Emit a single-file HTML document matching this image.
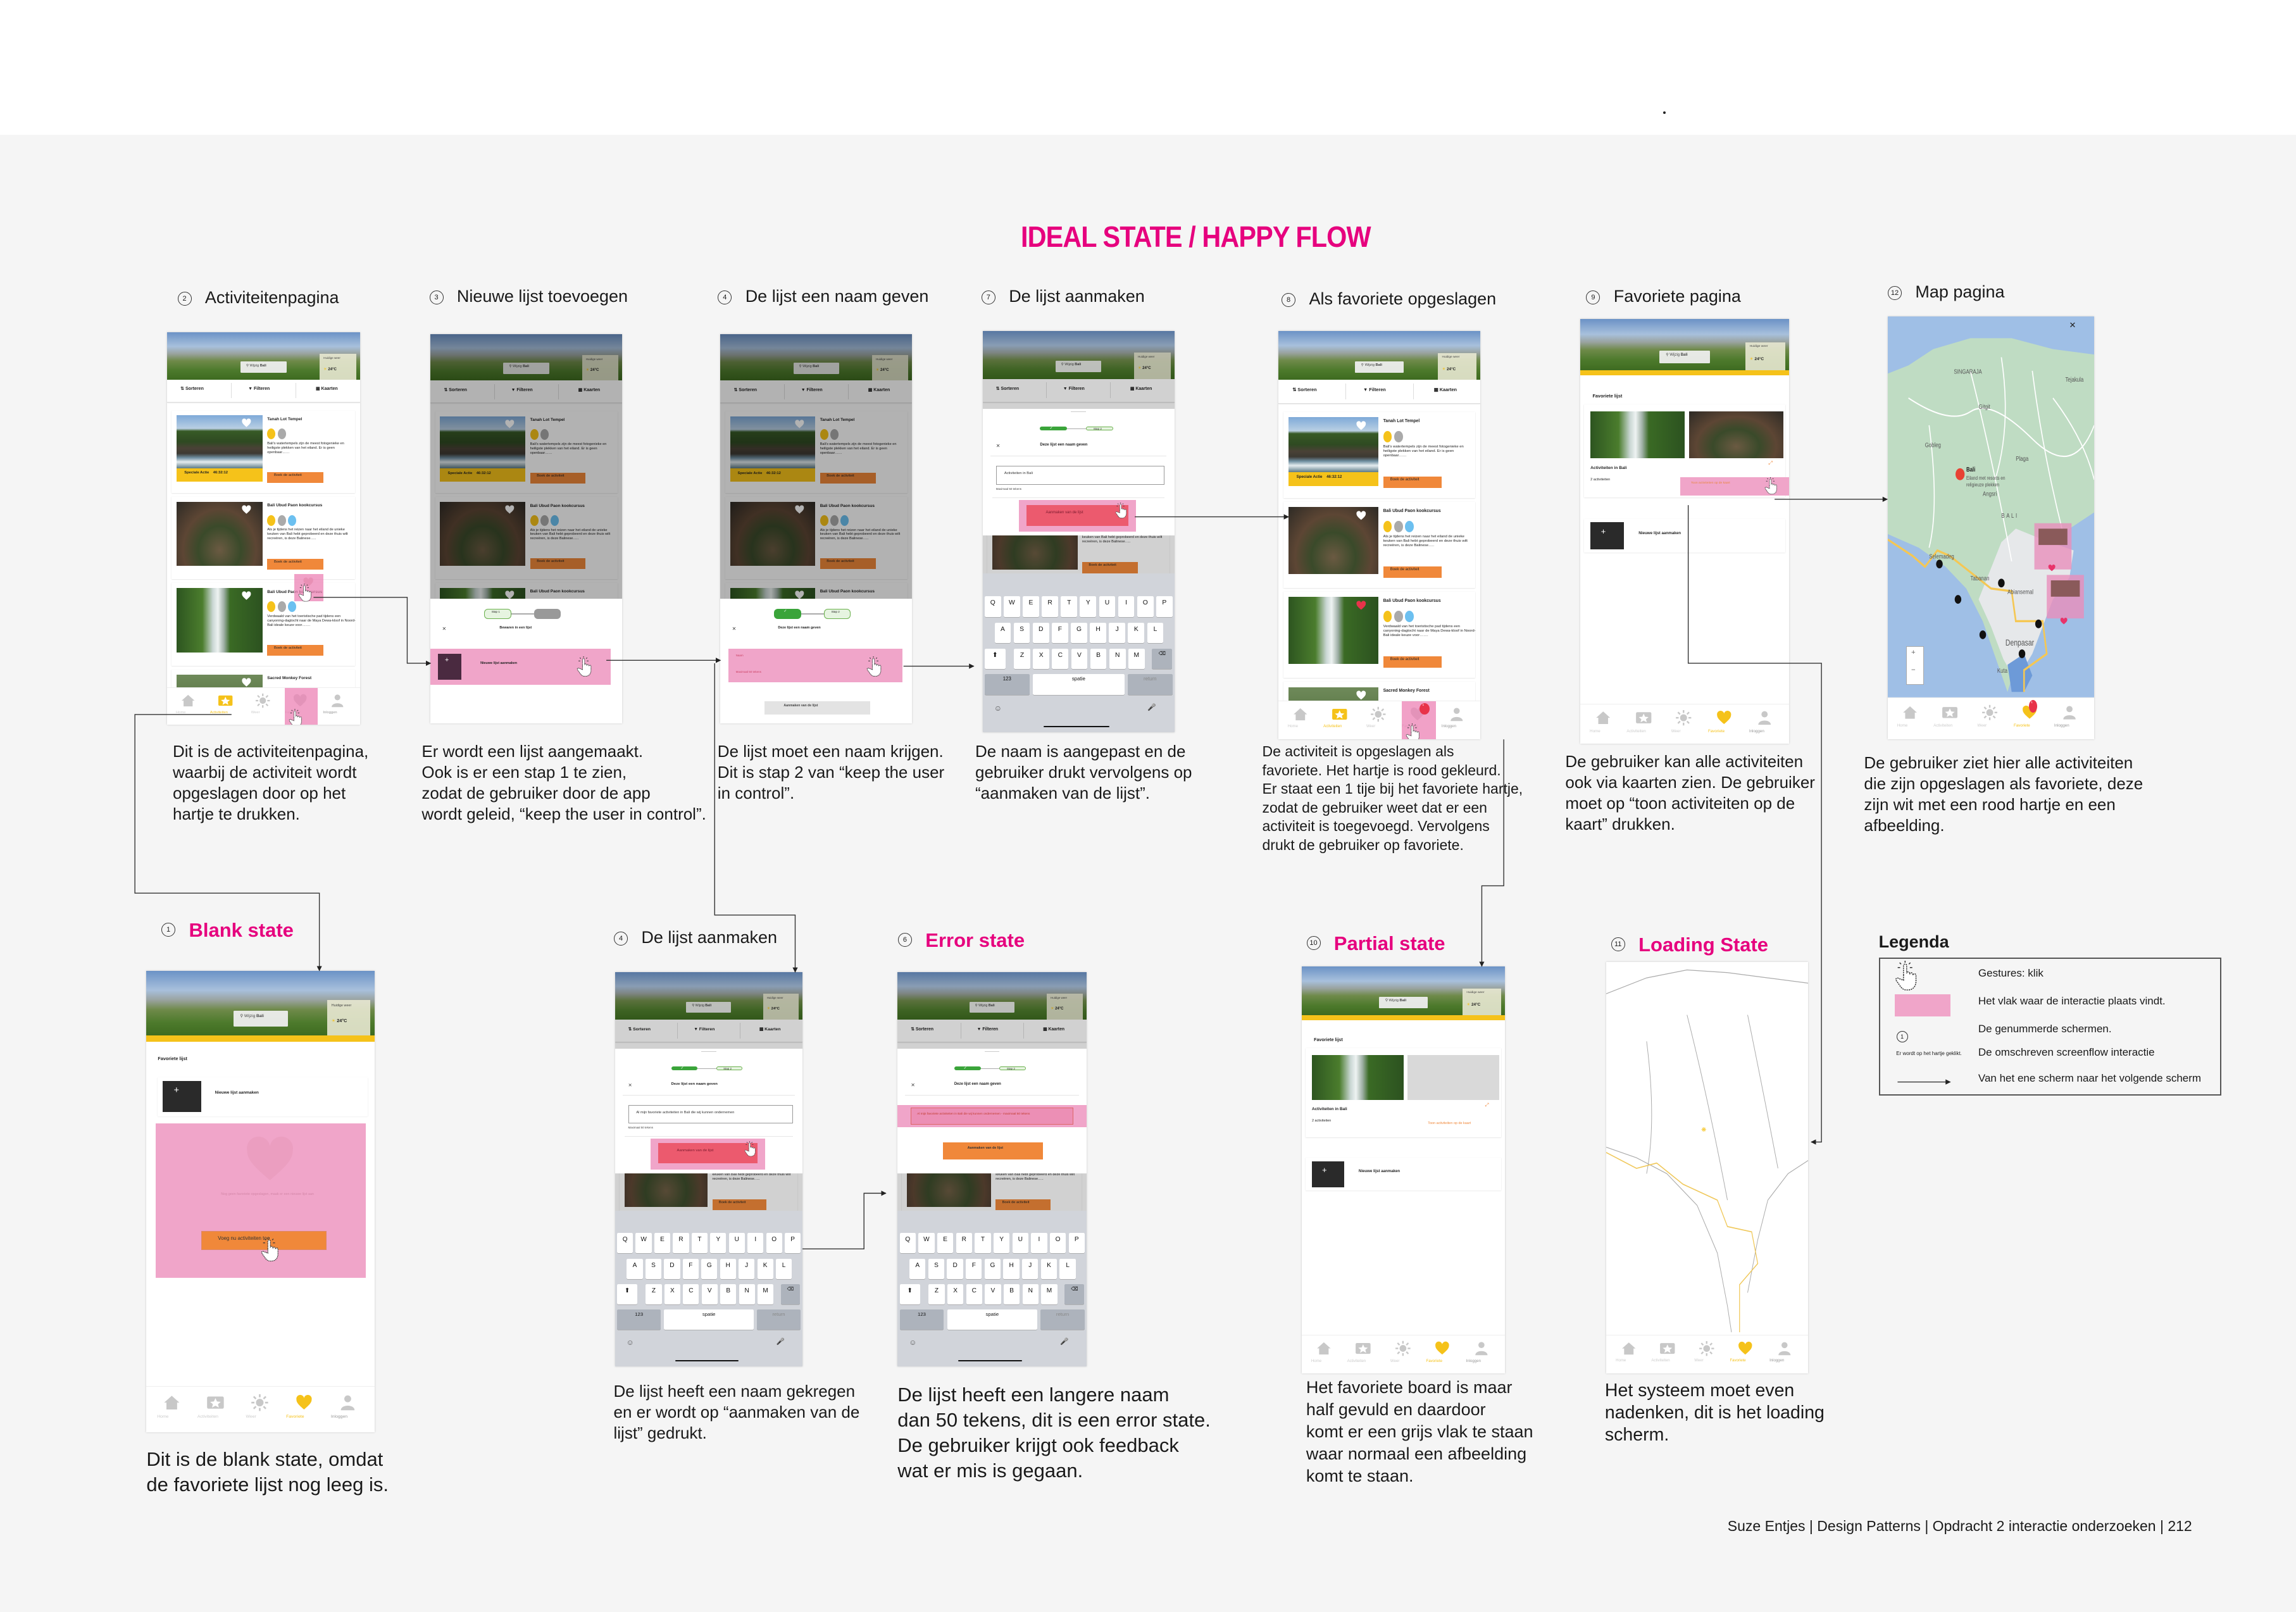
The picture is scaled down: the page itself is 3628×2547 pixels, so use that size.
<!DOCTYPE html>
<html><head><meta charset="utf-8">
<style>
html,body{margin:0;padding:0}
body{width:3628px;height:2547px;position:relative;overflow:hidden;background:#f5f5f5;font-family:"Liberation Sans",sans-serif;color:#1a1a1a}
#top{position:absolute;left:0;top:0;width:3628px;height:213px;background:#fff}
.ph{position:absolute;background:#fff;overflow:hidden;box-shadow:0 0 3px rgba(0,0,0,.18);color:#222}
.ph div,.ph svg{position:absolute;box-sizing:border-box}
.ph .s{position:static}
.t{position:absolute;white-space:nowrap;font-size:26px;line-height:33px;color:#1a1a1a}
.lab{position:absolute;white-space:nowrap;font-size:27px;color:#1a1a1a}
.num{position:absolute;width:22px;height:22px;border:1.5px solid #333;border-radius:50%;font-size:11px;text-align:center;line-height:21px;box-sizing:border-box}
.pk{color:#e6007e;font-weight:bold;font-size:31px}
</style></head><body>
<div id="top"></div>
<div id="root"></div>
<script>
const S=3628/1568;
const P=v=>(v*S).toFixed(1);
function E(l,t,w,h,st,c){return `<div style="left:${l}em;top:${t}%;width:${w}em;height:${h}%;${st||''}">${c||''}</div>`}
function T(l,t,fs,txt,st,w){return `<div style="left:${l}em;top:${t}%;${w?'width:'+w+'em;':'white-space:nowrap;'}${st||''}"><div class="s" style="font-size:${fs}em;line-height:1.22">${txt}</div></div>`}
const IC={
house:'<path d="M2 12 L12 3 L22 12 H19 V21 H5 V12Z"/>',
star:'<rect x="1" y="4" width="22" height="16" rx="2"/><polygon fill="#fff" points="12,6 14,10.5 19,11 15.3,14 16.5,18.5 12,16 7.5,18.5 8.7,14 5,11 10,10.5"/>',
sun:'<circle cx="12" cy="12" r="5"/><g stroke="currentColor" stroke-width="2.2"><line x1="12" y1="1" x2="12" y2="5"/><line x1="12" y1="19" x2="12" y2="23"/><line x1="1" y1="12" x2="5" y2="12"/><line x1="19" y1="12" x2="23" y2="12"/><line x1="4" y1="4" x2="7" y2="7"/><line x1="17" y1="17" x2="20" y2="20"/><line x1="4" y1="20" x2="7" y2="17"/><line x1="17" y1="7" x2="20" y2="4"/></g>',
heart:'<path d="M12 21 C5 15 2 12 2 8 A5 5 0 0 1 12 6 A5 5 0 0 1 22 8 C22 12 19 15 12 21Z"/>',
person:'<circle cx="12" cy="7" r="4.5"/><path d="M3 22 C3 14 21 14 21 22Z"/>'
};
function ico(n,col){return `<svg viewBox="0 0 24 24" style="left:0;top:0;width:100%;height:100%;color:${col}" fill="${col}">${IC[n]}</svg>`}
function hand(l,t,sz){return `<svg viewBox="0 0 26 32" style="left:${l}em;top:${t}%;width:${sz}em;height:${sz*1.23}em" fill="#fff" stroke="#333" stroke-width="1" stroke-dasharray="1.4 0.8"><path d="M9 15 V5 a1.6 1.6 0 0 1 3.2 0 V13 a1.6 1.6 0 0 1 3.2 0 V14 a1.6 1.6 0 0 1 3.2 0 V15 a1.6 1.6 0 0 1 3.2 0 V21 c0 5 -3 9 -8 9 h-2 c-3 0 -5 -2 -7 -5 l-3.5 -5 a1.6 1.6 0 0 1 2.6 -1.8 L9 20Z"/><g fill="none" stroke-dasharray="none"><line x1="10.6" y1="0" x2="10.6" y2="2"/><line x1="5" y1="2" x2="6.5" y2="3.5"/><line x1="16" y1="2" x2="14.5" y2="3.5"/><line x1="3" y1="7" x2="5.5" y2="7"/><line x1="18" y1="7" x2="15.5" y2="7"/></g></svg>`}
const SKY='background:linear-gradient(180deg,#6b92c6 0%,#a8c0dc 30%,#9aa3a0 45%,#6f8a4a 60%,#4d7a2c 80%,#3e6b20 100%)';
function header(h,yellow){
 let c=E(38,62,24,24,'background:rgba(238,238,238,.95);border-radius:.4em',T(3,18,1.8,'&#9906; Wijzig <b>Bali</b>','color:#444'));
 c+=E(79,45,19,55,'background:rgba(232,232,210,.9)',T(2,10,1.5,'Huidige weer','color:#444')+T(2,52,2,'<span style="color:#f5c21a">&#9728;</span> <b>24°C</b>'));
 let r=E(0,0,100,h,SKY,c);
 if(yellow)r+=E(0,h,100,1.3,'background:#f5c21a');
 return r;
}
function tabs(t,h){return E(0,t,100,h,'background:#fff;border-bottom:1px solid #ddd;box-shadow:0 .3em .4em rgba(0,0,0,.08)',
 T(7,33,2.3,'<b>&#8645; Sorteren</b>')+E(33.3,15,.2,70,'background:#ddd')+T(42,33,2.3,'<b>&#9660; Filteren</b>')+E(66.6,15,.2,70,'background:#ddd')+T(77,33,2.3,'<b>&#9638; Kaarten</b>'))}
const IMG={
temple:'background:linear-gradient(180deg,#7ea9d8 0%,#b9cfe3 25%,#375a26 30%,#2f4a22 50%,#4a4236 62%,#3d3a33 72%,#6e8ea0 80%,#e5ecef 88%,#5d7b87 100%)',
food:'background:radial-gradient(ellipse at 50% 75%,#6b5a42 0%,#3a4a2a 35%,#5d4634 60%,#2d2a25 100%)',
water:'background:linear-gradient(90deg,#2d5520 0%,#4b7d2d 30%,#c9d6d3 42%,#eef3f2 48%,#9fb0a6 55%,#3a6a24 62%,#2c5220 100%)',
monkey:'background:linear-gradient(180deg,#6f8a5a,#3f5f2d)'};
function card(top,img,title,desc,special,heart,icons){
 let c=E(2.6,6,44.5,special?64:78,IMG[img]);
 c+=`<svg viewBox="0 0 24 24" style="left:36em;top:9%;width:5.5em;height:5.5em" fill="${heart||'#fff'}">${IC.heart}</svg>`;
 if(special)c+=E(2.6,70,44.5,16,'background:#f5c21a',T(4,20,1.9,'<b>Speciale Actie &nbsp;&nbsp; 46:32:12</b>'));
 c+=T(49.5,8,2.15,'<b>'+title+'</b>');
 const cols=icons||['#f5c21a','#aaa','#6cc0f0'];
 cols.forEach((cl,i)=>{c+=E(49.5+i*5.4,22,4.3,13,'background:'+cl+';border-radius:50%')});
 c+=T(49.5,38,1.85,desc,'',46);
 c+=E(49.5,75,29,13,'background:#f0883a',T(3.5,12,1.9,'Boek de activiteit'));
 return E(2.4,top,95,21,'background:#fff;box-shadow:0 .2em .5em rgba(0,0,0,.15)',c);
}
function list(start,heart3){
 return card(start,'temple','Tanah Lot Tempel',"Bali's watertempels zijn de meest fotogenieke en heiligste plekken van het eiland. Er is geen openbaar……",1,0,['#f5c21a','#aaa'])+
 card(start+22,'food','Bali Ubud Paon kookcursus','Als je tijdens het reizen naar het eiland de unieke keuken van Bali hebt geprobeerd en deze thuis wilt recreëren, is deze Balinese…..')+
 card(start+44,'water','Bali Ubud Paon kookcursus','Verdwaald van het toeristische pad tijdens een canyoning-dagtocht naar de Maya Dewa-kloof in Noord-Bali ideale keuze voor…….',0,heart3)+
 card(start+66,'monkey','Sacred Monkey Forest','');
}
function nav(active,top,extra){
 const it=[['house','Home'],['star','Activiteiten'],['sun','Weer'],['heart','Favoriete'],['person','Inloggen']];
 let c='';
 it.forEach((v,i)=>{const x=11+i*19.3;const col=i===active?'#f5c21a':'#c8c8c8';
  c+=E(x-4,12,8,45,'',ico(v[0],col))+T(x-8,62,1.9,v[1],'text-align:center;width:8.4em;color:'+(i===active?'#f5c21a':(i==4?'#999':'#ccc')));});
 return E(0,top,100,100-top,'background:#fff;border-top:1px solid #eee',c+(extra||''));
}
function stepper(t,done){return E(30,t,14,3.2,'background:#3aa43a;border-radius:2em',T(5,5,2,'&#10003;','color:#fff'))+E(44,t+1.5,10,.3,'background:#aaa')+E(54,t,14,3.2,'background:#e6f4e0;border:.2em solid #6ab04c;border-radius:2em',T(3.5,12,1.5,'Stap 2','color:#333'))}
function kb(top){
 let c='';const r1='QWERTYUIOP',r2='ASDFGHJKL',r3='ZXCVBNM';
 const key=(l,t,w,ch,bg,fs,col)=>E(l,t,w,13,`background:${bg||'#fff'};border-radius:.7em;box-shadow:0 .2em 0 #999;text-align:center`,`<div class="s" style="font-size:${fs||3.4}em;line-height:2.1;color:${col||'#111'};text-align:center">${ch}</div>`);
 [...r1].forEach((k,i)=>c+=key(1.1+i*9.94,14.3,8.5,k));
 [...r2].forEach((k,i)=>c+=key(6.3+i*9.94,30.8,8.5,k));
 c+=key(1.1,47.2,10.8,'&#11014;');
 [...r3].forEach((k,i)=>c+=key(16.4+i*9.94,47.2,8.5,k));
 c+=key(88.4,47.2,10.4,'&#9003;','#adb3bc',2.6);
 c+=key(1.1,63.5,23.4,'123','#adb3bc',2.6);
 c+=key(26.2,63.5,47.8,'spatie','#fff',2.6);
 c+=key(75.7,63.5,23.3,'return','#adb3bc',2.6,'#888');
 c+=T(6,82,4,'&#9786;','color:#555')+T(86,82,3.6,'&#127908;','color:#555;filter:grayscale(1)')+E(32,96,34,1,'background:#111;border-radius:1em');
 return E(0,top,100,100-top,'background:#d1d4da',c);
}
function kbPhone(variant){
 let c=header(12)+tabs(12,5.8)+list(19.9)+E(0,0,100,100,'background:rgba(0,0,0,.18)');
 let m=E(46,2,8,.4,'background:#ccc')+stepper(14)+T(7,27,2.6,'&#10005;','color:#444')+T(30,27,2,'<b>Deze lijst een naam geven</b>')+E(4,37,92,.3,'background:#e6e6e6');
 if(variant==='err'){
  m+=E(0,45,100,18,'background:#f0a5c9',E(7,12,86,76,'background:#ec8fb5;border:1px solid #d66',T(3,30,1.6,'Al mijn favoriete activiteiten in Bali die wij kunnen ondernemen - maximaal 50 tekens','color:#c0392b')));
  m+=E(24,75,53,14,'background:#f0883a',T(13,25,1.8,'<b>Aanmaken van de lijst</b>','color:#333'));
 }else{
  m+=E(7,45,88,15,'border:.15em solid #999',T(4,30,1.9,variant==='long'?'Al mijn favoriete activiteiten in Bali die wij kunnen ondernemen':'Activiteiten in Bali','color:#333'));
  m+=T(7,62,1.5,'Maximaal 50 tekens','color:#444')+E(5,70,90,.3,'background:#e6e6e6');
  m+=E(19,72,61,25,'background:#f0a5c9',E(4,15,53,66,'background:#ec5a6e',T(10,28,2,'Aanmaken van de lijst','color:#7a1b2e')));
  m+=hand(69,74,7);
 }
 c+=E(0,19.4,100,31.6,'background:#fff',m);
 c+=kb(60.5);
 return c;
}
function favPage(partial){
 let c=header(12)+ '';
 c+=E(0,12,100,1.2,'background:#f5c21a');
 c+=T(6,17.5,2.2,'<b>Favoriete lijst</b>');
 let k=E(3,8,45,50,IMG.water)+E(50,8,45,50,partial?'background:#d9d9d9':IMG.food);
 k+=T(3,66,2,'<b>Activiteiten in Bali</b>')+T(3,79,1.7,'2 activiteiten');
 k+=T(88,60,2.4,'&#10530;','color:#f0883a');
 if(partial)k+=T(60,82,1.7,'Toon activiteiten op de kaart','color:#f0883a');
 else k+=E(46,78,52,20,'background:#f0a5c9',T(5,25,1.5,'Toon activiteiten op de kaart','color:#e8863a'))+hand(86,78,7);
 c+=E(2,20,96,22,'background:#fff;box-shadow:0 .2em .5em rgba(0,0,0,.15)',k);
 c+=E(2,47,96,8,'background:#fff;box-shadow:0 .2em .5em rgba(0,0,0,.12)',E(3,10,16,80,'background:#2a2a2a',T(5,15,4,'+','color:#fff'))+T(26,35,1.9,'<b>Nieuwe lijst aanmaken</b>'));
 c+=nav(3,90.5);
 return c;
}
function blankPage(){
 let c=header(14)+E(0,14,100,1.4,'background:#f5c21a');
 c+=T(5,18.5,2,'<b>Favoriete lijst</b>');
 c+=E(5,23,92,8.5,'background:#fff;box-shadow:0 .2em .5em rgba(0,0,0,.12)',E(2,10,17,80,'background:#2a2a2a',T(5,15,4,'+','color:#fff'))+T(25,35,1.8,'<b>Nieuwe lijst aanmaken</b>'));
 let p=`<svg viewBox="0 0 24 24" style="left:36em;top:6%;width:28em;height:24em" fill="#eb9ec0">${IC.heart}</svg>`;
 p+=T(6,45,1.5,'Nog geen favoriete opgeslagen, maak er een nieuwe lijst aan','color:#d487a8;text-align:center',86);
 p+=E(20,70,55,12,'background:#f0883a;border:.2em solid #d86',T(7,20,2.2,'Voeg nu activiteiten toe','color:#333'))+hand(46,74,9);
 c+=E(4,33,92,33.5,'background:#f0a5c9',p);
 c+=nav(3,90);
 return c;
}
function listPhone(fav){
 let c=header(12)+tabs(12,5.8)+list(19.9,fav?'#e8334a':0);
 if(!fav)c+=E(66,61.5,15,7,'background:rgba(236,130,180,.75)',`<svg viewBox="0 0 24 24" style="left:4em;top:10%;width:6em;height:6em" fill="#e88fb4">${IC.heart}</svg>`)+hand(68,64,8);
 let ex=fav?E(70,5,5,30,'background:#e8334a;border-radius:50%',T(1.3,5,1.5,'1','color:#fff')):'';
 c+=nav(1,90.5,E(61,0,17,100,'background:rgba(236,130,180,.75)')+ex);
 c+=hand(63,96,8);
 return c;
}
function sheetPhone(kind){
 let c=header(12)+tabs(12,5.8)+list(19.9)+nav(1,90.5)+E(0,0,100,100,'background:rgba(0,0,0,.3)');
 let m;
 if(kind==='new'){
  m=E(28,8,14,8,'background:#e6f4e0;border:.2em solid #6ab04c;border-radius:2em',T(3.5,10,1.5,'Stap 1'))+E(42,11.5,12,1.2,'background:#aaa')+E(54,8,14,8,'background:#999;border-radius:2em');
  m+=T(6,22,2.6,'&#10005;','color:#444')+T(36,22,1.8,'<b>Bewaren in een lijst</b>');
  m+=E(0,40,94,29,'background:#f0a5c9',E(4,14,12,72,'background:#4a2a40',T(3.5,10,3.5,'+','color:#fff'))+T(26,35,1.8,'<b>Nieuwe lijst aanmaken</b>'))+hand(76,46,9);
  c+=E(0,68,100,32,'background:#fff',m);
 }else{
  m=E(28,8,14,8,'background:#3aa43a;border-radius:2em',T(5,5,2,'&#10003;','color:#fff'))+E(42,11.5,12,1.2,'background:#aaa')+E(54,8,14,8,'background:#e6f4e0;border:.2em solid #6ab04c;border-radius:2em',T(3.5,10,1.5,'Stap 2'));
  m+=T(6,22,2.6,'&#10005;','color:#444')+T(30,22,1.8,'<b>Deze lijst een naam geven</b>');
  m+=E(4,40,91,27,'background:#f0a5c9',T(4,15,1.5,'Naam','color:#c46')+T(4,65,1.5,'Maximaal 50 tekens','color:#c46'))+hand(76,46,9);
  m+=E(23,82,55,11,'background:#e3e3e3',T(10,20,1.7,'<b>Aanmaken van de lijst</b>','color:#444'));
  c+=E(0,68,100,32,'background:#fff',m);
 }
 return c;
}
function mapPhone(){
 let s=`<svg viewBox="0 0 100 140" preserveAspectRatio="none" style="left:0;top:0;width:100%;height:90%">
 <rect width="100" height="140" fill="#9fbfe6"/>
 <polygon fill="#bfdcc3" points="0,21 10,18 22,12 40,8 60,8 80,12 100,14 100,72 92,76 84,80 78,86 76,95 72,104 68,115 62,128 58,138 52,125 46,112 38,100 28,92 15,85 0,80"/>
 <polygon fill="#e6e8ea" points="44,104 55,83 62,78 75,82 90,86 88,96 80,104 76,112 70,124 62,134 56,126 50,114"/>
 <polygon fill="#6d9ad8" points="58,128 66,124 70,132 66,138 60,138"/>
 <g fill="none" stroke="#fff" stroke-width=".5"><path d="M10 30 Q30 40 40 35 T70 45 T100 40"/><path d="M40 20 Q50 50 60 90"/><path d="M20 40 Q25 70 20 85"/><path d="M70 20 Q75 50 85 80"/><path d="M55 15 Q60 40 52 60"/><path d="M80 30 Q95 45 100 60"/></g>
 <path d="M0 82 L12 88 L18 92 L24 86 L30 88 L40 94 L50 100 L60 101 L62 112 L75 112 L77 124 L66 130 L66 138" fill="none" stroke="#f5c753" stroke-width=".8"/>
 <g fill="#111"><circle cx="25" cy="91" r="1.6"/><circle cx="34" cy="104" r="1.6"/><circle cx="46" cy="117" r="1.6"/><circle cx="55" cy="98" r="1.6"/><circle cx="73" cy="113" r="1.6"/><circle cx="65" cy="124" r="1.6"/></g>
 <circle cx="35" cy="58" r="2.2" fill="#e84234"/>
 <g font-family="Liberation Sans" font-size="2.4" fill="#555"><text x="32" y="21">SINGARAJA</text><text x="44" y="34">Gitgit</text><text x="18" y="48">Gobleg</text><text x="62" y="53">Plaga</text><text x="38" y="57" fill="#222" font-weight="bold">Bali</text><text x="38" y="60" font-size="2">Eiland met resorts en</text><text x="38" y="62.5" font-size="2">religieuze plekken</text><text x="46" y="66">Angsri</text><text x="55" y="74" letter-spacing=".8">BALI</text><text x="20" y="89">Selemadeg</text><text x="40" y="97">Tabanan</text><text x="58" y="102">Abiansemal</text><text x="57" y="121" font-size="3.2">Denpasar</text><text x="53" y="131">Kuta</text><text x="86" y="24">Tejakula</text></g>
 <rect x="71" y="76" width="18" height="17" fill="#e98fbb" opacity=".8"/><rect x="77" y="95" width="18" height="16" fill="#e98fbb" opacity=".8"/>
 <rect x="73" y="78" width="14" height="6" fill="#8a5a5a"/><rect x="79" y="97" width="14" height="6" fill="#8a5a5a"/>
 </svg>`;
 let c=s+T(88,1,4,'&#10005;','color:#222');
 c+=E(9,78,8.5,9,'background:#fff;border:1px solid #aaa',T(2.2,5,3.5,'+','color:#666')+T(2.2,52,3.5,'&minus;','color:#666'));
 c+=`<svg viewBox="0 0 24 24" style="left:77em;top:58.5%;width:5em;height:4em" fill="#e8336a">${IC.heart}</svg><svg viewBox="0 0 24 24" style="left:83em;top:71%;width:5em;height:4em" fill="#e8336a">${IC.heart}</svg>`;
 c+=nav(3,90,E(68.5,5,4,30,'background:#e8334a;border-radius:50%',T(1,5,1.4,'1','color:#fff')));
 return c;
}
function loadPhone(){
 let c=`<svg viewBox="0 0 100 140" preserveAspectRatio="none" style="left:0;top:0;width:100%;height:90%"><g fill="none" stroke="#aaa" stroke-width=".3"><path d="M0 12 L20 6 L40 3 L60 4 L80 6 L100 8"/><path d="M0 70 L15 74 L30 80 L45 92 L55 110 L60 130 L62 140"/><path d="M100 75 L90 80 L80 90 L75 105 L70 125"/><path d="M40 20 Q50 50 60 90"/><path d="M20 30 Q25 60 20 80"/><path d="M70 20 Q78 50 85 78"/></g><path d="M0 72 L15 78 L25 76 L38 84 L55 90 L60 100 L72 102 L75 114 L66 122 L66 140" fill="none" stroke="#f0c85a" stroke-width=".4"/></svg>`;
 c+=T(47,40,3,'<span style="color:#f5c21a">&#10059;</span>');
 c+=nav(3,90.5);
 return c;
}
function phone(x,y,w,h,inner){const W=w*S;return `<div class="ph" style="left:${P(x)}px;top:${P(y)}px;width:${W.toFixed(1)}px;height:${P(h)}px;font-size:${(W/100).toFixed(3)}px">${inner}</div>`}
let H='';
H+=phone(114,227,132,268,listPhone(0));
H+=phone(294,228,131,266,sheetPhone('new'));
H+=phone(492,228,131,266,sheetPhone('name'));
H+=phone(671,226,131,274,kbPhone('std'));
H+=phone(873,226,138,279,listPhone(1));
H+=phone(1079,218,143,290,favPage(0));
H+=phone(1289,216,141,289,mapPhone());
H+=phone(100,663,156,315,blankPage());
H+=phone(420,664,128,269,kbPhone('long'));
H+=phone(613,664,129,269,kbPhone('err'));
H+=phone(889,660,139,278,favPage(1));
H+=phone(1097,657,138,281,loadPhone());
function tx(x,y,html,st){return `<div class="t" style="left:${P(x)}px;top:${P(y)}px;${st||''}">${html}</div>`}
function lab(x,y,n,txt,pink){return `<div class="num" style="left:${P(x)-11}px;top:${P(y)-11}px">${n}</div><div class="lab${pink?' pk':''}" style="left:${P(x+14)}px;top:${P(y)-17}px">${txt}</div>`}
H+=`<div style="position:absolute;left:${P(697)}px;top:${P(150)}px;white-space:nowrap;font-size:46px;font-weight:bold;color:#e6007e;letter-spacing:-1px;transform:scaleX(.9);transform-origin:0 0">IDEAL STATE / HAPPY FLOW</div>`;
H+=`<div style="position:absolute;left:${P(1136)}px;top:${P(76)}px;width:4px;height:4px;background:#222;border-radius:50%"></div>`;
H+=lab(126,204,2,'Activiteitenpagina')+lab(298,203,3,'Nieuwe lijst toevoegen')+lab(495,203,4,'De lijst een naam geven')+lab(675,203,7,'De lijst aanmaken')+lab(880,205,8,'Als favoriete opgeslagen')+lab(1088,203,9,'Favoriete pagina')+lab(1294,200,12,'Map pagina');
H+=lab(115,635,1,'Blank state',1)+lab(424,641,4,'De lijst aanmaken')+lab(618,642,6,'Error state',1)+lab(897,644,10,'Partial state',1)+lab(1105,645,11,'Loading State',1);
H+=tx(118,506,'Dit is de activiteitenpagina,<br>waarbij de activiteit wordt<br>opgeslagen door op het<br>hartje te drukken.');
H+=tx(288,506,'Er wordt een lijst aangemaakt.<br>Ook is er een stap 1 te zien,<br>zodat de gebruiker door de app<br>wordt geleid, “keep the user in control”.');
H+=tx(490,506,'De lijst moet een naam krijgen.<br>Dit is stap 2 van “keep the user<br>in control”.');
H+=tx(666,506,'De naam is aangepast en de<br>gebruiker drukt vervolgens op<br>“aanmaken van de lijst”.');
H+=tx(862,507,'De activiteit is opgeslagen als<br>favoriete. Het hartje is rood gekleurd.<br>Er staat een 1 tije bij het favoriete hartje,<br>zodat de gebruiker weet dat er een<br>activiteit is toegevoegd. Vervolgens<br>drukt de gebruiker op favoriete.','font-size:23px;line-height:29.5px');
H+=tx(1069,513,'De gebruiker kan alle activiteiten<br>ook via kaarten zien. De gebruiker<br>moet op “toon activiteiten op de<br>kaart” drukken.');
H+=tx(1273,514,'De gebruiker ziet hier alle activiteiten<br>die zijn opgeslagen als favoriete, deze<br>zijn wit met een rood hartje en een<br>afbeelding.');
H+=tx(100,988,'Dit is de blank state, omdat<br>de favoriete lijst nog leeg is.','font-size:31px;line-height:40px');
H+=tx(419,943,'De lijst heeft een naam gekregen<br>en er wordt op “aanmaken van de<br>lijst” gedrukt.');
H+=tx(613,944,'De lijst heeft een langere naam<br>dan 50 tekens, dit is een error state.<br>De gebruiker krijgt ook feedback<br>wat er mis is gegaan.','font-size:31px;line-height:40px');
H+=tx(892,940,'Het favoriete board is maar<br>half gevuld en daardoor<br>komt er een grijs vlak te staan<br>waar normaal een afbeelding<br>komt te staan.','font-size:27px;line-height:35px');
H+=tx(1096,942,'Het systeem moet even<br>nadenken, dit is het loading<br>scherm.','font-size:28.5px;line-height:35px');
H+=`<div class="t" style="right:${(3628-1497*S).toFixed(1)}px;top:${P(1035)}px;font-size:23px">Suze Entjes | Design Patterns | Opdracht 2 interactie onderzoeken | 212</div>`;
H+=`<div class="t" style="left:${P(1283)}px;top:${P(636)}px;font-size:27px;font-weight:bold">Legenda</div>`;
H+=`<div style="position:absolute;left:${P(1283)}px;top:${P(654)}px;width:${P(234)}px;height:${P(94)}px;border:2px solid #555;box-sizing:border-box"></div>`;
H+=`<div class="ph" style="left:${P(1294)}px;top:${P(656)}px;width:40px;height:50px;font-size:10px;background:none;box-shadow:none">${hand(0,0,4)}</div>`;
H+=`<div style="position:absolute;left:${P(1294)}px;top:${P(679)}px;width:${P(38)}px;height:${P(15)}px;background:#f0a5c9"></div>`;
H+=`<div class="num" style="left:${P(1299)-9}px;top:${P(708)-9}px;width:18px;height:18px;line-height:16px;font-size:9px">1</div>`;
H+=`<div class="t" style="left:${P(1295)}px;top:${P(717)}px;font-size:8px;line-height:12px">Er wordt op het hartje geklikt.</div>`;
[['Gestures: klik',665],['Het vlak waar de interactie plaats vindt.',684],['De genummerde schermen.',703],['De omschreven screenflow interactie',719],['Van het ene scherm naar het volgende scherm',737]].forEach(a=>{H+=`<div class="t" style="left:${P(1351)}px;top:${P(a[1]-6)}px;font-size:17px;line-height:26px">${a[0]}</div>`});
H+=`<svg style="position:absolute;left:0;top:0" width="3628" height="2547" viewBox="0 0 1568 1101"><defs><marker id="a" viewBox="0 0 10 10" refX="9" refY="5" markerWidth="6" markerHeight="6" orient="auto"><path d="M0 0 L10 5 L0 10z" fill="#222"/></marker></defs>
<g fill="none" stroke="#333" stroke-width=".6" marker-end="url(#a)">
<polyline points="214,408 278,408 278,453 294,453"/>
<polyline points="158,488 92,488 92,610 218,610 218,663"/>
<polyline points="414,451 492,451"/>
<polyline points="617,455 665,455"/>
<polyline points="775,353 880,353"/>
<polyline points="488,453 488,625 543,625 543,664"/>
<polyline points="1027,505 1027,605 1012,605 1012,660"/>
<polyline points="1212,341 1289,341"/>
<polyline points="1153,345 1153,453 1244,453 1244,780 1237,780"/>
<polyline points="548,853 590,853 590,815 605,815"/>
<polyline points="1296,739 1332,739"/>
</g></svg>`;
document.getElementById('root').innerHTML=H;
</script>
</body></html>
